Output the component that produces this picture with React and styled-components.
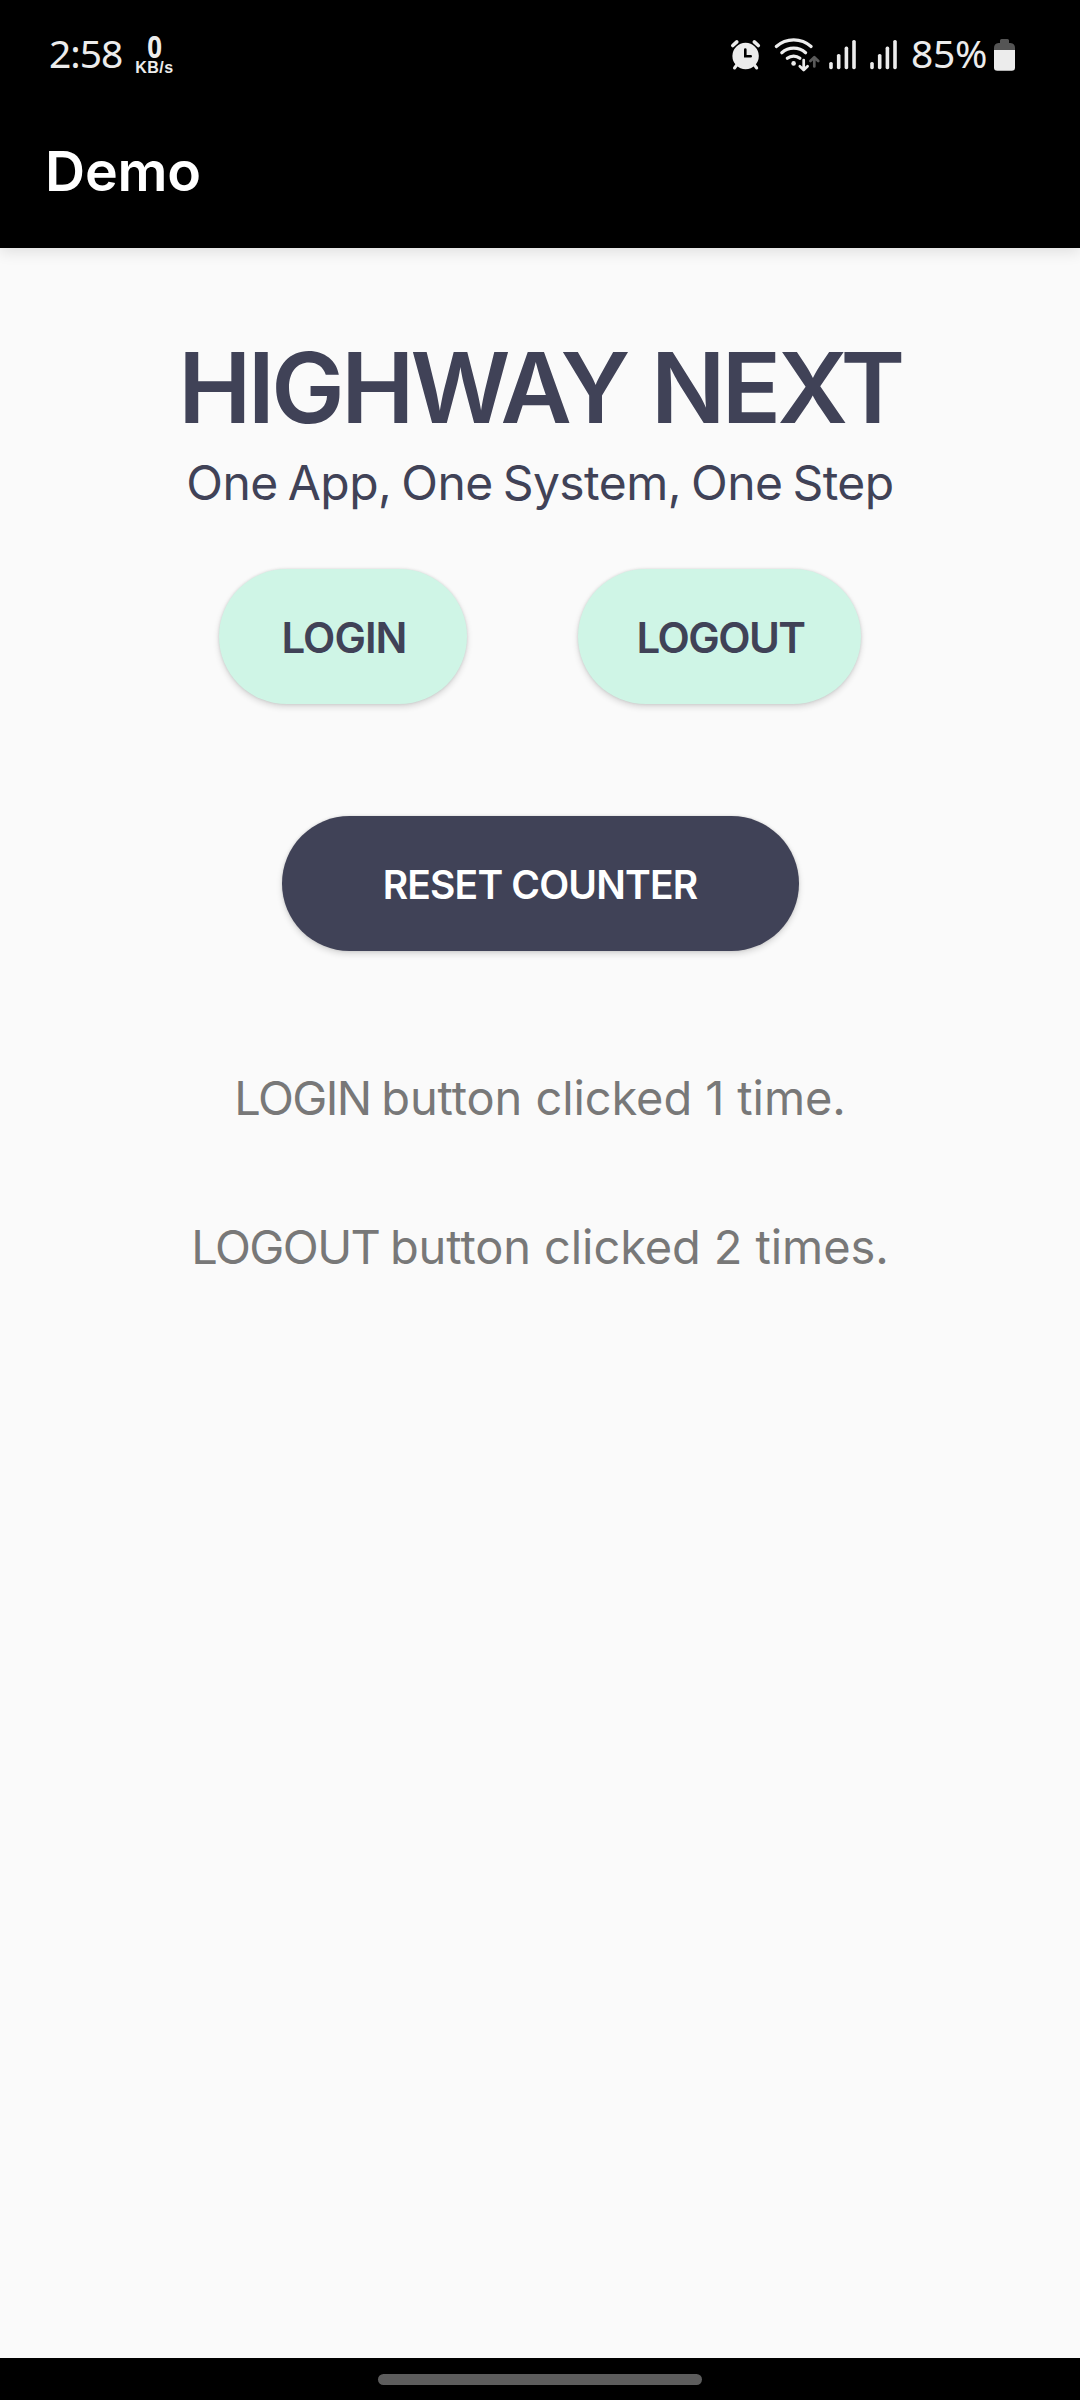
import React, { useState } from 'react';
import styled, { createGlobalStyle } from 'styled-components';

const GlobalStyle = createGlobalStyle`
  *, *::before, *::after { box-sizing: border-box; }
  body { margin: 0; background: #fafafa; }
`;

const INK = '#404257';
const MINT = '#cff5e6';
const ICON = '#ececec';

const Screen = styled.div`
  display: flex;
  flex-direction: column;
  width: 1080px;
  height: 2400px;
  background: #fafafa;
  font-family: Inter, 'Liberation Sans', sans-serif;
`;

const StatusBar = styled.div`
  display: flex;
  align-items: center;
  justify-content: space-between;
  height: 106px;
  padding: 0 65px 0 49px;
  background: #000;
  color: ${ICON};
`;

const StatusGroup = styled.div`
  display: flex;
  align-items: center;
`;

const StatusText = styled.span`
  margin-right: ${(p) => p.$after || 0}px;
  font: 400 39px/50px 'Noto Sans', sans-serif;
  letter-spacing: ${(p) => p.$spacing}px;
  white-space: nowrap;
`;

const NetSpeed = styled.div`
  display: flex;
  flex-direction: column;
  align-items: center;
  gap: 2px;
  width: 40px;
  margin-left: 12px;
  padding-top: 6px;
`;

const NetValue = styled.span`
  font: 700 30px/22px 'Noto Sans', sans-serif;
  transform: scaleX(0.86);
`;

const NetUnit = styled.span`
  font: 700 16px/16px 'Liberation Sans', sans-serif;
  letter-spacing: 0.5px;
`;

const Icon = styled.svg`
  display: block;
  flex: none;
  height: 38px;
  margin-right: ${(p) => p.$after || 0}px;
`;

const AppBar = styled.header`
  display: flex;
  align-items: center;
  height: 142px;
  padding: 0 45px;
  background: #000;
  box-shadow: 0 4px 14px rgba(0, 0, 0, 0.11);
`;

const AppTitle = styled.h1`
  margin: 0 0 13px;
  color: #fff;
  font-size: 55.5px;
  font-weight: 600;
  line-height: 66px;
  letter-spacing: -0.2px;
`;

const Content = styled.main`
  flex: 1;
  display: flex;
  flex-direction: column;
  align-items: center;
  padding-top: 80px;
`;

const Headline = styled.h2`
  margin: 0;
  color: ${INK};
  font-size: 98px;
  font-weight: 600;
  line-height: 120px;
  letter-spacing: -3.6px;
  word-spacing: 3px;
  white-space: nowrap;
`;

const Tagline = styled.p`
  margin: 0;
  color: ${INK};
  font-size: 48px;
  font-weight: 400;
  line-height: 70px;
  letter-spacing: -0.54px;
  word-spacing: -3px;
  white-space: nowrap;
`;

const ButtonRow = styled.div`
  display: flex;
  gap: 111px;
  margin: 51px 0 112px;
`;

const PillButton = styled.button`
  display: flex;
  align-items: center;
  justify-content: center;
  width: ${(p) => p.$width}px;
  height: 135px;
  padding: 2px 0 0 ${(p) => (p.$dark ? 0 : 2)}px;
  border: 0;
  border-radius: 67.5px;
  background: ${(p) => (p.$dark ? INK : MINT)};
  color: ${(p) => (p.$dark ? '#fff' : INK)};
  box-shadow: 0 3px 6px rgba(0, 0, 0, 0.14), 0 0 3px rgba(0, 0, 0, 0.12);
  font-family: inherit;
  font-size: ${(p) => (p.$dark ? 39 : 42)}px;
  font-weight: 600;
  letter-spacing: ${(p) => p.$spacing}px;
  white-space: nowrap;
`;

const CounterList = styled.div`
  display: flex;
  flex-direction: column;
  align-items: center;
  gap: 85px;
  margin-top: 115px;
`;

const CounterText = styled.p`
  margin: 0;
  color: #787878;
  font-size: 47px;
  font-weight: 400;
  line-height: 64px;
  letter-spacing: -0.1px;
  white-space: nowrap;
`;

const CounterName = styled.span`
  margin-right: -2.5px;
  letter-spacing: -1.6px;
`;

const NavBar = styled.footer`
  display: flex;
  justify-content: center;
  height: 42px;
  padding-top: 16px;
  background: #000;
`;

const NavHandle = styled.div`
  width: 324px;
  height: 11px;
  border-radius: 5.5px;
  background: #5d5d5d;
`;

function AlarmIcon() {
  return (
    <Icon $after={12} width="32" viewBox="730 34 32 38" fill="none" strokeLinecap="round">
      <circle cx="745.6" cy="56" r="13.2" fill={ICON} />
      <path d="M732.8 45.5l4-3.6M758.3 45.5l-4-3.6" stroke={ICON} strokeWidth="3.6" />
      <path d="M737.5 64l-3 4M753.7 64l3 4" stroke={ICON} strokeWidth="3" />
      <path d="M745.3 49.5v6.7h5.4" stroke="#000" strokeWidth="2.6" />
    </Icon>
  );
}

function WifiIcon() {
  return (
    <Icon $after={8} width="46" viewBox="774 34 46 38" fill="none" strokeLinecap="round" strokeLinejoin="round">
      <path d="M776.3 46.5a26 26 0 0 1 34.8 0" stroke={ICON} strokeWidth="3.2" />
      <path d="M781.8 52.7a18 18 0 0 1 23.8 0" stroke={ICON} strokeWidth="3.2" />
      <path d="M787.3 58.3a10 10 0 0 1 12.6 0" stroke={ICON} strokeWidth="3.2" />
      <circle cx="793.6" cy="63.4" r="2.3" fill={ICON} />
      <path d="M803.7 60v9.5M799.8 66.2l3.9 3.8 3.9-3.8" stroke={ICON} strokeWidth="2.7" />
      <path d="M814.3 66.5v-9M810.4 61l3.9-3.8 3.9 3.8" stroke="#5a5a5a" strokeWidth="2.7" />
    </Icon>
  );
}

function SignalIcon({ after }) {
  return (
    <Icon $after={after} width="30" viewBox="0 34 30 38" fill={ICON}>
      <rect x="1.2" y="62" width="3.6" height="7.2" rx="1.6" />
      <rect x="8.9" y="54" width="3.6" height="15.2" rx="1.6" />
      <rect x="16.6" y="46.6" width="3.6" height="22.6" rx="1.6" />
      <rect x="24.2" y="40" width="3.6" height="29.2" rx="1.6" />
    </Icon>
  );
}

function BatteryIcon() {
  return (
    <Icon width="21" viewBox="994 34 21 38">
      <path
        d="M1000 43v-2.4a1.5 1.5 0 0 1 1.5-1.5h6a1.5 1.5 0 0 1 1.5 1.5V43h1.5q4.5 0.5 4.5 5v2h-21v-2q0-4.5 4.5-5z"
        fill="#555"
      />
      <path d="M994 50h21v17.5q0 3.3-3.3 3.3h-14.4q-3.3 0-3.3-3.3z" fill={ICON} />
    </Icon>
  );
}

function Counter({ name, count }) {
  return (
    <CounterText>
      <CounterName>{name}</CounterName>
      {` button clicked ${count} time${count === 1 ? '' : 's'}.`}
    </CounterText>
  );
}

export default function App() {
  const [logins, setLogins] = useState(1);
  const [logouts, setLogouts] = useState(2);

  const reset = () => {
    setLogins(0);
    setLogouts(0);
  };

  return (
    <Screen>
      <GlobalStyle />
      <StatusBar>
        <StatusGroup>
          <StatusText $spacing={-1}>2:58</StatusText>
          <NetSpeed>
            <NetValue>0</NetValue>
            <NetUnit>KB/s</NetUnit>
          </NetSpeed>
        </StatusGroup>
        <StatusGroup>
          <AlarmIcon />
          <WifiIcon />
          <SignalIcon after={11} />
          <SignalIcon after={12} />
          <StatusText $spacing={-0.31} $after={7}>85%</StatusText>
          <BatteryIcon />
        </StatusGroup>
      </StatusBar>
      <AppBar>
        <AppTitle>Demo</AppTitle>
      </AppBar>
      <Content>
        <Headline>HIGHWAY NEXT</Headline>
        <Tagline>One App, One System, One Step</Tagline>
        <ButtonRow>
          <PillButton $width={248} $spacing={-0.98} onClick={() => setLogins(logins + 1)}>
            LOGIN
          </PillButton>
          <PillButton $width={283} $spacing={-1.5} onClick={() => setLogouts(logouts + 1)}>
            LOGOUT
          </PillButton>
        </ButtonRow>
        <PillButton $dark $width={517} $spacing={-0.83} onClick={reset}>
          RESET COUNTER
        </PillButton>
        <CounterList>
          <Counter name="LOGIN" count={logins} />
          <Counter name="LOGOUT" count={logouts} />
        </CounterList>
      </Content>
      <NavBar>
        <NavHandle />
      </NavBar>
    </Screen>
  );
}
